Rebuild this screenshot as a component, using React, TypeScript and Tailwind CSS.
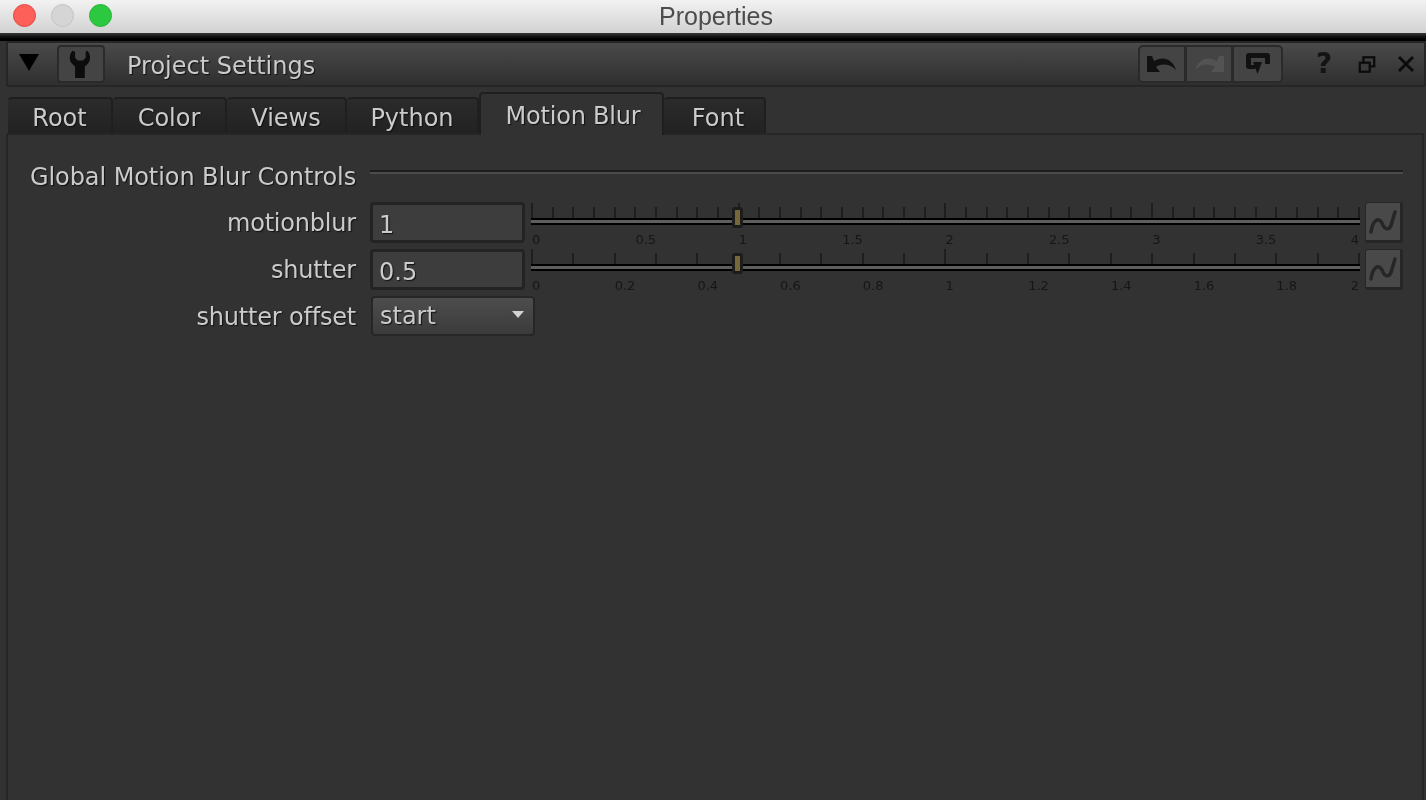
const textCls = "text-[#cbcbcb] [text-shadow:1px_1px_1px_#111]";

function Wrench() {
  return (
    <svg width="23" height="30" viewBox="0 0 26 34" fill="#0c0c0c">
      <path d="M5 2 C1 6 1 14 5 17 L8 20 L8 33 L19 33 L19 20 L22 17 C26 14 26 6 22 2 L20 3 L20 10 L17 13 L11 13 L8 10 L8 3 Z" />
    </svg>
  );
}

function UndoIcon({ flip, color }: { flip?: boolean; color: string }) {
  return (
    <svg width="32" height="22" viewBox="0 0 32 22" fill={color} className={flip ? "-scale-x-100" : ""}>
      <path d="M1 3 L1 19 L14 19 L10 14 C16 10 24 11 30 17 C27 7 18 2 8 8 L6 3 Z" />
    </svg>
  );
}

function LoopIcon() {
  return (
    <svg width="24" height="22" viewBox="0 0 24 22" fill="#111">
      <path d="M3 0 L21 0 Q24 0 24 3 L24 11 L19 11 L19 5 L5 5 L5 12 L9 12 L9 16 L3 16 Q0 16 0 13 L0 3 Q0 0 3 0 Z" />
      <path d="M7 9 L16 9 L11.500 21 Z" />
    </svg>
  );
}

function CurveButton() {
  return (
    <button className="w-[38px] h-[41px] shrink-0 rounded-[3px] border-r-[3px] border-b-[3px] border-l border-t border-[#262626] bg-[#494949] flex items-center justify-center">
      <svg width="30" height="30" viewBox="0 0 30 30" fill="none" stroke="#262626" strokeWidth="3.500" strokeLinecap="round">
        <path d="M3 25 C5 12 11 10 14 16 C17 24 22 24 24 15 L27 5" />
      </svg>
    </button>
  );
}

function Slider({ cells, tail, tickCount }: { cells: string[]; tail: string[]; tickCount: number }) {
  const ticks = Array.from({ length: tickCount });
  return (
    <div className="flex-1 flex flex-col relative h-[41px]">
      <div className="flex items-end shrink-0 h-[15px] mt-[1px]">
        {ticks.map((_, i) => (
          <div key={i} className={`flex-1 border-l-2 border-[#1e1e1e] ${i % 10 === 0 ? "h-[15px]" : "h-[11px]"} ${i === ticks.length - 1 ? "border-r-2" : ""}`} />
        ))}
      </div>
      <div className="h-[7px] shrink-0 bg-[#5e5e5e] border-y-2 border-black" />
      <div className="flex shrink-0 mt-[8px] px-[1px] text-[13px] leading-[14px] text-[#161616] font-['DejaVu_Sans',sans-serif]">
        {cells.map((c) => (
          <span key={c} className="flex-1">{c}</span>
        ))}
        <span className="flex-1 flex justify-between">
          {tail.map((c) => (
            <span key={c}>{c}</span>
          ))}
        </span>
      </div>
      {/* handle sits over the track */}
      <div className="absolute left-1/4 top-[5px] -ml-[6px] w-[11px] h-[21px] rounded-[3px] bg-[#1c1c1c] p-[3px]">
        <div className="w-full h-full bg-[#77683a]" />
      </div>
    </div>
  );
}

function Field({ value }: { value: string }) {
  return (
    <div className={`w-[155px] h-[41px] shrink-0 rounded-[4px] border-[3px] border-[#232323] bg-[#3d3d3d] pl-[6px] flex items-center pt-[4px] text-[24px] ${textCls}`}>
      {value}
    </div>
  );
}

function Row({ label, children }: { label: string; children: React.ReactNode }) {
  return (
    <div className="flex items-center gap-[14px]">
      <div className={`w-[326px] text-right text-[24px] leading-[30px] tracking-[-0.2px] mt-[1px] ${textCls}`}>{label}</div>
      {children}
    </div>
  );
}

const tabs = ["Root", "Color", "Views", "Python"];
const tabWidths = ["w-[105px]", "w-[114px]", "w-[120px]", "w-[132px]"];

export default function App() {
  return (
    <div className="w-[1426px] h-[800px] overflow-hidden flex flex-col bg-[#323232] blur-[0.4px] font-['Lucida_Grande','DejaVu_Sans',sans-serif]">
      <div className="h-[33px] shrink-0 relative flex items-center justify-center pl-[6px] bg-gradient-to-b from-[#f2f2f2] to-[#d2d2d2] text-[25px] text-[#4c4c4c] font-['Liberation_Sans',sans-serif]">
        <div className="absolute left-[13px] top-[4px] flex gap-[15px]">
          <div className="w-[23px] h-[23px] rounded-full bg-[#fd5f59] border border-[#e5483f]" />
          <div className="w-[23px] h-[23px] rounded-full bg-[#d5d5d5] border border-[#c4c4c4]" />
          <div className="w-[23px] h-[23px] rounded-full bg-[#2cc940] border border-[#25b636]" />
        </div>
        Properties
      </div>
      <div className="h-[8px] shrink-0 bg-gradient-to-b from-[#3a3a3a] to-black" />
      <div className="flex-1 flex flex-col pl-[6px] min-h-0">
        <div className="h-[46px] shrink-0 flex items-center border-y-2 border-x-2 border-[#262626] bg-gradient-to-b from-[#4a4a4a] to-[#2f2f2f]">
          <div className="w-0 h-0 ml-[11px] border-x-[10px] border-x-transparent border-t-[17px] border-t-black -mt-[4px]" />
          <button className="ml-[18px] w-[48px] h-[38px] pr-[3px] rounded-[4px] border-2 border-[#2a2a2a] bg-[#444] flex items-center justify-center">
            <Wrench />
          </button>
          <span className={`ml-[22px] pt-[4px] text-[24px] ${textCls}`}>Project Settings</span>
          <div className="ml-auto flex items-center h-[38px] rounded-[5px] border-2 border-[#2a2a2a] bg-[#444]">
            <div className="w-[47px] h-full flex items-center justify-center border-r-[3px] border-[#2a2a2a]"><UndoIcon color="#111" /></div>
            <div className="w-[47px] h-full flex items-center justify-center border-r-[3px] border-[#2a2a2a]"><UndoIcon flip color="#535353" /></div>
            <div className="w-[47px] h-full flex items-center justify-center"><LoopIcon /></div>
          </div>
          <span className="ml-[29px] w-[24px] text-center text-[28px] font-bold text-[#141414] font-['DejaVu_Sans',sans-serif]">?</span>
          <svg className="ml-[22px]" width="18" height="19" viewBox="0 0 20 20" fill="none" stroke="#0c0c0c" strokeWidth="2.500">
            <rect x="6" y="2" width="12" height="10" />
            <rect x="2" y="8" width="11" height="10" fill="#3b3b3b" />
          </svg>
          <svg className="ml-[20px] mr-[8px]" width="20" height="20" viewBox="0 0 20 20" stroke="#0c0c0c" strokeWidth="3">
            <path d="M3 3 L17 17 M17 3 L3 17" />
          </svg>
        </div>
        <div className="flex items-end h-[46px] shrink-0 pl-[2px]">
          {tabs.map((t, i) => (
            <div
              key={t}
              className={`h-[36px] pt-[4px] flex items-center justify-center rounded-t-[4px] border-r-2 border-t-2 border-[#1f1f1f] bg-gradient-to-b from-[#2b2b2b] to-[#222] text-[24px] ${textCls} ${tabWidths[i]}`}
            >
              {t}
            </div>
          ))}
          <div className={`relative z-10 w-[185px] h-[43px] -mb-[2px] pt-[2px] pl-[3px] flex items-center justify-center rounded-t-[4px] border-x-2 border-t-2 border-[#1f1f1f] bg-[#323232] text-[24px] tracking-[-0.2px] ${textCls}`}>
            Motion Blur
          </div>
          <div className={`w-[102px] h-[36px] pt-[4px] pl-[8px] flex items-center justify-center rounded-t-[4px] border-r-2 border-t-2 border-[#1f1f1f] bg-gradient-to-b from-[#2b2b2b] to-[#222] text-[24px] ${textCls}`}>
            Font
          </div>
        </div>
        <div className="flex-1 mr-[2px] border-t-2 border-x-2 border-[#262626] pl-[22px] pr-[19px] pt-[24px] min-h-0 flex flex-col">
          <div className="flex items-center gap-[14px]">
            <span className={`text-[24px] leading-[36px] whitespace-nowrap w-[326px] tracking-[-0.08px] ${textCls}`}>Global Motion Blur Controls</span>
            <div className="flex-1 h-[4px] -mt-[11px] border-t-2 border-[#1d1d1d] bg-[#4b4b4b]" />
          </div>
          <div className="mt-[7px] flex flex-col gap-[6px]">
            <Row label="motionblur">
              <div className="flex-1 flex items-start gap-[5px]">
                <Field value="1" />
                <div className="w-[829px] ml-[1px]">
                  <Slider tickCount={40} tail={["3.5", "4"]} cells={["0", "0.5", "1", "1.5", "2", "2.5", "3"]} />
                </div>
                <CurveButton />
              </div>
            </Row>
            <Row label="shutter">
              <div className="flex-1 flex items-start gap-[5px]">
                <Field value="0.5" />
                <div className="w-[829px] ml-[1px] -mt-[1px]">
                  <Slider tickCount={20} tail={["1.8", "2"]} cells={["0", "0.2", "0.4", "0.6", "0.8", "1", "1.2", "1.4", "1.6"]} />
                </div>
                <CurveButton />
              </div>
            </Row>
            <Row label="shutter offset">
              <div className={`ml-[1px] w-[164px] h-[40px] rounded-[4px] border-2 border-[#262626] bg-gradient-to-b from-[#4d4d4d] to-[#3b3b3b] pl-[7px] pr-[9px] flex items-center justify-between text-[24px] ${textCls}`}>
                start
                <div className="w-0 h-0 border-x-[6px] border-x-transparent border-t-[7px] border-t-[#d2d2d2] -mt-[4px]" />
              </div>
            </Row>
          </div>
        </div>
      </div>
    </div>
  );
}
